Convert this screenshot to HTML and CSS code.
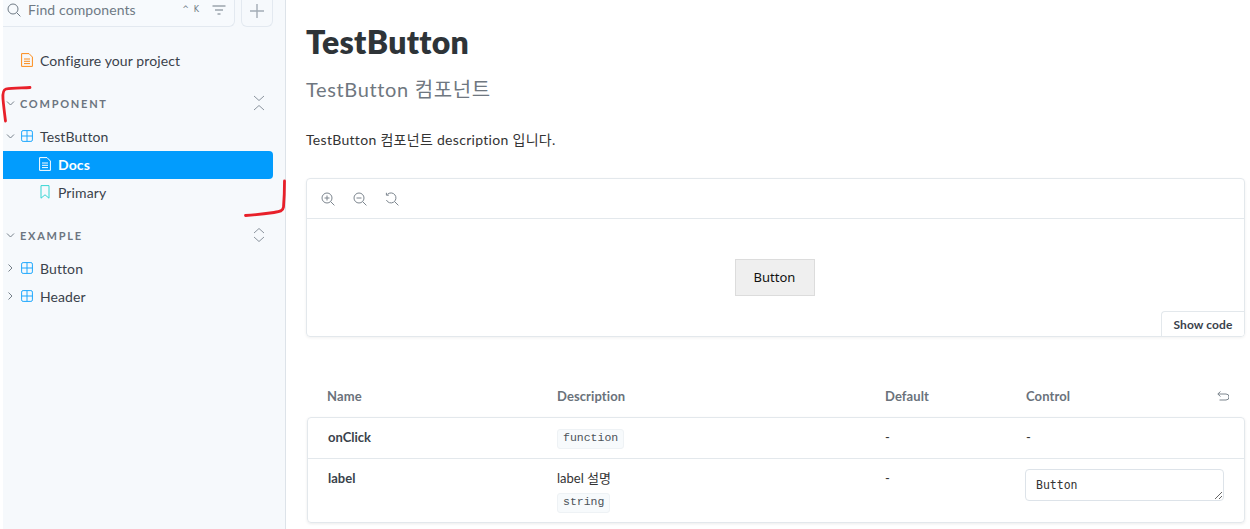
FILE: index.html
```html
<!DOCTYPE html>
<html lang="en">
<head>
  <meta charset="UTF-8" />
  <title>TestButton - Docs</title>
  <link rel="stylesheet" href="styles.css">
</head>
<body>
  <div class="app">
    <aside class="sidebar">
      <div class="search-row">
        <div class="search">
          <svg class="search-icon" width="14" height="14" viewBox="0 0 14 14"><circle cx="6" cy="6" r="5" /><path d="M9.7 9.7L13.4 13.4" /></svg>
          <span class="search-text">Find components</span>
          <span class="search-key">^ K</span>
          <svg class="filter-icon" width="14" height="10" viewBox="0 0 14 10"><path d="M0.5 1H13.5M3 5H11M5.5 9H8.5" /></svg>
        </div>
        <div class="add-btn">
          <svg width="14" height="14" viewBox="0 0 14 14"><path d="M7 0V14M0 7H14" /></svg>
        </div>
      </div>

      <div class="tree-item top-item">
        <svg class="icon" width="12" height="14" viewBox="0 0 12 14"><path class="orange" d="M1 .6H8L11.4 4V13.4H.6V.6ZM3 6H9M3 8.3H9M3 10.6H9" /></svg>
        <span>Configure your project</span>
      </div>

      <div class="group-head first-group">
        <svg class="chev" width="8" height="5" viewBox="0 0 8 5"><path d="M.5 .5L4 4L7.5 .5" /></svg>
        <span class="group-name">COMPONENT</span>
        <svg class="toggle" width="12" height="16" viewBox="0 0 12 16"><path d="M1 1L6 5.5L11 1M1 15L6 10.5L11 15" /></svg>
      </div>
      <div class="tree-item">
        <svg class="chev" width="8" height="5" viewBox="0 0 8 5"><path d="M.5 .5L4 4L7.5 .5" /></svg>
        <svg class="icon" width="12" height="12" viewBox="0 0 12 12"><rect class="blue" x=".6" y=".6" width="10.8" height="10.8" rx="1.5" /><path class="blue" d="M6 .6V11.4M.6 6H11.4" /></svg>
        <span>TestButton</span>
      </div>
      <div class="tree-item sub active">
        <svg class="icon" width="14" height="14" viewBox="0 0 12 14"><path class="white" d="M1 .6H8L11.4 4V13.4H.6V.6ZM3 6H9M3 8.3H9M3 10.6H9" /></svg>
        <span>Docs</span>
      </div>
      <div class="tree-item sub">
        <svg class="icon" width="14" height="14" viewBox="0 0 10 14"><path class="teal" d="M1 .6H9V13.2L5 9.8L1 13.2Z" /></svg>
        <span>Primary</span>
      </div>

      <div class="group-head">
        <svg class="chev" width="8" height="5" viewBox="0 0 8 5"><path d="M.5 .5L4 4L7.5 .5" /></svg>
        <span class="group-name">EXAMPLE</span>
        <svg class="toggle" width="12" height="16" viewBox="0 0 12 16"><path d="M1 6L6 1.5L11 6M1 10L6 14.5L11 10" /></svg>
      </div>
      <div class="tree-item">
        <svg class="chev" width="5" height="8" viewBox="0 0 5 8"><path d="M.5 .5L4 4L.5 7.5" /></svg>
        <svg class="icon" width="12" height="12" viewBox="0 0 12 12"><rect class="blue" x=".6" y=".6" width="10.8" height="10.8" rx="1.5" /><path class="blue" d="M6 .6V11.4M.6 6H11.4" /></svg>
        <span>Button</span>
      </div>
      <div class="tree-item">
        <svg class="chev" width="5" height="8" viewBox="0 0 5 8"><path d="M.5 .5L4 4L.5 7.5" /></svg>
        <svg class="icon" width="12" height="12" viewBox="0 0 12 12"><rect class="blue" x=".6" y=".6" width="10.8" height="10.8" rx="1.5" /><path class="blue" d="M6 .6V11.4M.6 6H11.4" /></svg>
        <span>Header</span>
      </div>
    </aside>

    <main class="content">
      <h1>TestButton</h1>
      <h2>TestButton 컴포넌트</h2>
      <p class="desc">TestButton 컴포넌트 description 입니다.</p>

      <section class="preview">
        <div class="toolbar">
          <svg width="14" height="14" viewBox="0 0 14 14"><circle cx="6" cy="6" r="5" /><path d="M9.7 9.7L13.4 13.4M3.5 6H8.5M6 3.5V8.5" /></svg>
          <svg width="14" height="14" viewBox="0 0 14 14"><circle cx="6" cy="6" r="5" /><path d="M9.7 9.7L13.4 13.4M3.5 6H8.5" /></svg>
          <svg width="14" height="14" viewBox="0 0 14 14"><path d="M2.4 2.4A5 5 0 1 1 1.4 8M9.7 9.7L13.4 13.4M1.4 .8V3.2H3.8" /></svg>
        </div>
        <div class="stage">
          <button class="demo-btn" type="button">Button</button>
          <div class="show-code">Show code</div>
        </div>
      </section>

      <section class="args">
        <div class="args-head">
          <span>Name</span>
          <span>Description</span>
          <span>Default</span>
          <span class="control-head">Control
            <svg width="12" height="10" viewBox="0 0 12 10"><path d="M3.5 .5L.8 3L3.5 5.5M1 3H9A2.5 2.5 0 0 1 9 9H2.5" /></svg>
          </span>
        </div>
        <div class="args-card">
          <div class="args-row">
            <div class="arg-name">onClick</div>
            <div><code>function</code></div>
            <div class="dash">-</div>
            <div class="dash">-</div>
          </div>
          <div class="args-row">
            <div class="arg-name">label</div>
            <div>
              <div class="arg-desc">label 설명</div>
              <code>string</code>
            </div>
            <div class="dash">-</div>
            <div><textarea class="arg-input">Button</textarea></div>
          </div>
        </div>
      </section>
    </main>
  </div>

  <!-- pen marks drawn on top of the screenshot -->
  <svg class="mark mark-a" width="32" height="40" viewBox="0 0 32 40"><path d="M30 2.5C22 3 12 2.5 6 4C3 5 2.5 8 3 14C3.5 20 4.5 28 5.5 36" /></svg>
  <svg class="mark mark-b" width="44" height="40" viewBox="0 0 44 40"><path d="M40.5 2C40.5 12 40 22 39.5 28C39 32 36 32.5 30 33.5C20 35 10 36 1.5 36.5" /></svg>
</body>
</html>
```

FILE: styles.css
```css
* {
  margin: 0;
  padding: 0;
  box-sizing: border-box;
}

body {
  font-family: Lato, "Noto Sans CJK KR", sans-serif;
  background: #ffffff;
  color: #333333;
  height: 529px;
  overflow: hidden;
}

svg {
  fill: none;
  flex: none;
}

.app {
  display: flex;
  height: 529px;
}

/* sidebar */
.sidebar {
  width: 283px;
  margin-left: 3px;
  background: #f6f9fc;
  border-right: 1px solid #dde3e9;
  font-size: 14px;
  letter-spacing: 0.1px;
  color: #333333;
}

.search-row {
  display: flex;
  gap: 6px;
  height: 27px;
  width: 270px;
}

.search {
  flex: 1;
  display: flex;
  align-items: center;
  padding: 0 8px 7px 4px;
  border: 1px solid #e3e9f0;
  border-top: none;
  border-left: none;
  border-radius: 0 0 6px 0;
  background: #f7fafd;
  color: #6f7a85;
}

.search-icon circle,
.search-icon path {
  stroke: #6f7a85;
}

.search-text {
  margin-left: 7px;
  flex: 1;
}

.search-key {
  font-family: "DejaVu Sans", sans-serif;
  font-size: 8px;
  margin-right: 13px;
  word-spacing: 2px;
}

.filter-icon path {
  stroke: #6f7a85;
}

.add-btn {
  width: 32px;
  display: flex;
  align-items: center;
  justify-content: center;
  padding-bottom: 5px;
  border: 1px solid #e3e9f0;
  border-top: none;
  border-radius: 0 0 6px 6px;
}

.add-btn path {
  stroke: #a3acb5;
  stroke-width: 1.4;
}

.tree-item {
  display: flex;
  align-items: center;
  height: 28px;
  width: 270px;
  padding-left: 3px;
  padding-bottom: 2px;
  color: #3a424b;
}

.tree-item .icon {
  margin-left: 6px;
  margin-right: 7px;
}

.tree-item .chev {
  width: 9px;
}

.top-item {
  margin-top: 20px;
  padding-left: 18px;
}

.top-item .icon {
  margin-left: 0;
  margin-right: 7px;
}

.sub {
  padding-left: 35px;
}

.sub .icon {
  margin-left: 0;
  margin-right: 6px;
}

.active {
  background: #029cfd;
  color: #ffffff;
  font-weight: 700;
  border-radius: 0 4px 4px 0;
}

.chev path {
  stroke: #76808a;
}

.orange {
  stroke: #fc8c1a;
}

.blue {
  stroke: #1ea7fd;
}

.white {
  stroke: #ffffff;
}

.teal {
  stroke: #37d5d3;
}

.group-head {
  display: flex;
  align-items: center;
  height: 28px;
  width: 270px;
  margin-top: 15px;
  margin-bottom: 5px;
  padding-left: 3px;
  padding-bottom: 2px;
}

.first-group {
  margin-top: 15px;
}

.group-head .chev {
  width: 9px;
}

.group-name {
  margin-left: 5px;
  flex: 1;
  font-size: 11px;
  font-weight: 700;
  letter-spacing: 1.75px;
  color: #6c7580;
}

.toggle {
  margin-right: 8px;
}

.toggle path {
  stroke: #8b949e;
}

/* main column */
.content {
  flex: 1;
  padding: 0 5px 0 20px;
}

h1 {
  margin-top: 22px;
  font-size: 32px;
  line-height: 40px;
  font-weight: 800;
  letter-spacing: 0.3px;
  color: #2e3438;
}

h2 {
  margin-top: 13px;
  font-size: 20px;
  line-height: 28px;
  font-weight: 400;
  letter-spacing: 0.65px;
  color: #6f7780;
}

.desc {
  margin-top: 27px;
  font-size: 14px;
  line-height: 20px;
  letter-spacing: 0.3px;
  color: #333333;
}

.preview {
  margin-top: 28px;
  height: 159px;
  border: 1px solid #e3e8ec;
  border-radius: 4px;
  box-shadow: 0 1px 3px rgba(0, 0, 0, 0.06);
  overflow: hidden;
}

.toolbar {
  display: flex;
  align-items: center;
  gap: 18px;
  height: 40px;
  padding-left: 14px;
  border-bottom: 1px solid #e3e8ec;
}

.toolbar circle,
.toolbar path {
  stroke: #7c858e;
}

.stage {
  display: flex;
  justify-content: center;
  padding-top: 40px;
  padding-right: 2px;
  height: 118px;
  position: relative;
}

.demo-btn {
  width: 80px;
  height: 37px;
  padding-bottom: 2px;
  border: 1px solid #dcdcdc;
  background: #efefef;
  font-family: "Noto Sans", sans-serif;
  font-size: 13px;
  color: #111111;
}

.show-code {
  position: absolute;
  right: 0;
  bottom: 0;
  width: 83px;
  height: 26px;
  line-height: 25px;
  text-align: center;
  font-size: 12px;
  font-weight: 700;
  letter-spacing: 0.1px;
  color: #3a424b;
  border: 1px solid #e3e8ec;
  border-right: none;
  border-bottom: none;
  border-radius: 4px 0 0 0;
  background: #ffffff;
}

.args {
  margin-top: 43px;
}

.args-head,
.args-row {
  display: grid;
  grid-template-columns: 229px 328px 141px 1fr;
  padding-left: 20px;
}

.args-head {
  height: 37px;
  grid-template-columns: 230px 328px 141px 1fr;
  padding-left: 21px;
  padding-bottom: 6px;
  align-items: center;
  font-size: 13px;
  font-weight: 700;
  letter-spacing: 0.1px;
  color: #6a727b;
}

.control-head {
  display: flex;
  align-items: center;
  justify-content: space-between;
  padding-right: 16px;
}

.control-head path {
  stroke: #7c858e;
}

.args-card {
  margin-left: 1px;
  border: 1px solid #e3e8ec;
  border-radius: 4px;
  box-shadow: 0 1px 3px rgba(0, 0, 0, 0.08);
  font-size: 13px;
  color: #333333;
}

.args-row {
  padding-top: 10px;
  padding-bottom: 10px;
}

.args-row + .args-row {
  border-top: 1px solid #e3e8ec;
}

.args-row:first-child {
  height: 40px;
}

.args-row:last-child {
  height: 64px;
}

.arg-name {
  font-weight: 700;
  line-height: 18px;
  color: #3a424b;
}

.arg-desc {
  line-height: 18px;
  margin-bottom: 5px;
}

.dash {
  line-height: 18px;
}

code {
  display: inline-block;
  font-family: "Liberation Mono", monospace;
  font-size: 11.5px;
  line-height: 16px;
  padding: 0 5px 2px;
  background: #f7fafc;
  border: 1px solid #eef2f5;
  border-radius: 3px;
  color: #4c5359;
}

.arg-input {
  display: block;
  width: 199px;
  height: 32px;
  padding: 8px 10px 4px;
  margin-left: -1px;
  font-family: "DejaVu Sans Mono", monospace;
  font-size: 11.5px;
  color: #333333;
  border: 1px solid #dde3e9;
  border-radius: 4px;
  outline: none;
}

/* pen marks */
.mark {
  position: absolute;
}

.mark path {
  stroke: #e8202a;
  stroke-width: 2.8;
  stroke-linecap: round;
  stroke-linejoin: round;
}

.mark-a {
  left: 0;
  top: 85px;
}

.mark-b {
  left: 244px;
  top: 179px;
}
```
